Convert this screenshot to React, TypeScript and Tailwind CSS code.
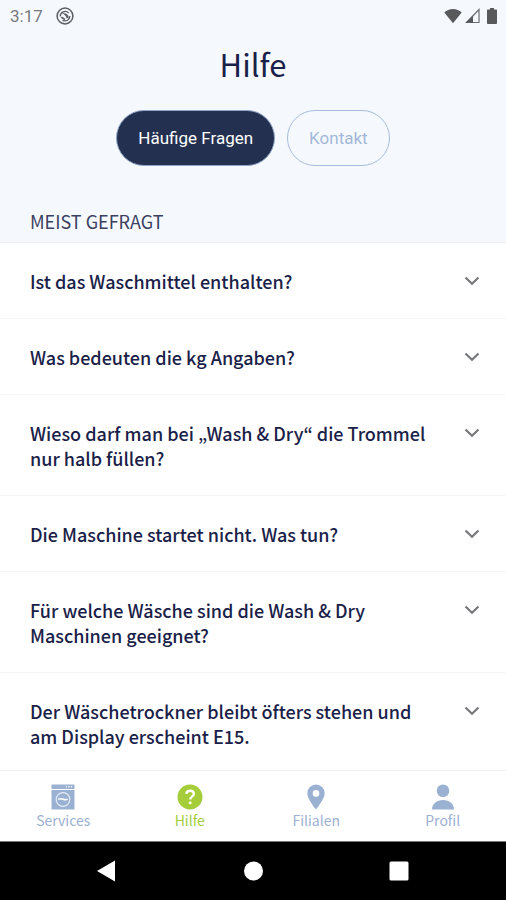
import { useState } from 'react'

const questions = [
  'Ist das Waschmittel enthalten?',
  'Was bedeuten die kg Angaben?',
  'Wieso darf man bei „Wash & Dry“ die Trommel nur halb füllen?',
  'Die Maschine startet nicht. Was tun?',
  'Für welche Wäsche sind die Wash & Dry Maschinen geeignet?',
  'Der Wäschetrockner bleibt öfters stehen und am Display erscheint E15.',
]

function StatusBar() {
  return (
    <div className="flex h-8 items-center justify-between pl-[10px] pr-[9px] font-[Roboto,sans-serif] text-[#77797c]">
      <div className="flex items-center gap-[13px]">
        <span className="text-[17px] leading-6">3:17</span>
        <svg width="18" height="18" viewBox="0 0 18 18" fill="none">
          <circle cx="9" cy="9" r="7.9" stroke="#5b5d60" strokeWidth="1.5" />
          <path d="M4.200 9.500a4.900 4.900 0 0 1 8.500-3.400M13.900 9a4.900 4.900 0 0 1-7.400 4.200" stroke="#5b5d60" strokeWidth="1.300" />
          <path d="M6 6.500c3.300-1 6.500.5 6.800 4.300l-2.300.4C10 8.800 8.500 7.400 6 6.500z" fill="#5b5d60" />
          <path d="M5.300 10.200l3.700 2.300" stroke="#5b5d60" strokeWidth="1.600" />
        </svg>
      </div>
      <div className="flex items-center gap-[3px]">
        <svg width="18" height="16" viewBox="0 0 18 16" fill="#58595b">
          <path d="M9 15.200L.3 4.500C2.600 2.200 5.600.9 9 .9s6.400 1.300 8.700 3.600z" />
        </svg>
        <svg width="15" height="16" viewBox="0 0 15 16">
          <path d="M1.500 14.500L14 1.500v13z" fill="none" stroke="#6b6c6e" strokeWidth="1.200" />
          <path d="M.5 15L8 7.500V15z" fill="#58595b" />
        </svg>
        <svg className="ml-1" width="10" height="16" viewBox="0 0 10 16" fill="#58595b">
          <path d="M3 0h4v1.500h2c.6 0 1 .4 1 1V15c0 .6-.4 1-1 1H1c-.6 0-1-.4-1-1V2.500c0-.6.4-1 1-1h2z" />
        </svg>
      </div>
    </div>
  )
}

function WasherIcon() {
  return (
    <svg width="24" height="26" viewBox="0 0 24 26">
      <path d="M.5.500h23v4.600H.5zM.5 6h23v19.500H.5z" fill="currentColor" />
      <circle cx="15.500" cy="2.800" r=".7" fill="#fff" />
      <circle cx="18" cy="2.800" r=".7" fill="#fff" />
      <circle cx="20.500" cy="2.800" r=".7" fill="#fff" />
      <circle cx="12" cy="15.500" r="6.800" fill="none" stroke="#e4ecf6" strokeWidth="1.200" />
      <path d="M7.300 15.300c1.800-.8 3.300-.7 4.700-.1s2.900.8 4.700.2" fill="none" stroke="#fff" strokeWidth="1.500" />
    </svg>
  )
}

function HelpIcon() {
  return (
    <svg width="26" height="26" viewBox="0 0 26 26" fill="none">
      <circle cx="13" cy="13" r="12.500" fill="#a4cd39" />
      <path
        d="M9.400 9.900c.2-2 1.700-3.100 3.700-3.100 2.100 0 3.700 1.200 3.700 3.100 0 2.700-3.500 2.700-3.500 5.200v.5"
        stroke="#fff"
        strokeWidth="2.400"
      />
      <circle cx="13.200" cy="18.800" r="1.500" fill="#fff" />
    </svg>
  )
}

function PinIcon() {
  return (
    <svg width="18" height="26" viewBox="0 0 18 26">
      <path
        fill="currentColor"
        fillRule="evenodd"
        d="M9 .5A8.700 8.700 0 0 0 .3 9.200C.3 15 9 25.500 9 25.500S17.700 15 17.700 9.200A8.700 8.700 0 0 0 9 .5zm0 5.600a3.300 3.300 0 1 1 0 6.600 3.300 3.300 0 0 1 0-6.600z"
      />
    </svg>
  )
}

function ProfileIcon() {
  return (
    <svg width="22" height="26" viewBox="0 0 22 26" fill="currentColor">
      <circle cx="11" cy="6.800" r="6.300" />
      <path d="M0 25.500c0-5.500 4.500-9.500 11-9.500s11 4 11 9.500z" />
    </svg>
  )
}

const tabs = [
  { name: 'Services', icon: <WasherIcon /> },
  { name: 'Hilfe', icon: <HelpIcon /> },
  { name: 'Filialen', icon: <PinIcon /> },
  { name: 'Profil', icon: <ProfileIcon /> },
]

export default function App() {
  const [section, setSection] = useState('faq')

  const active = 'border-[#8fa6c9] bg-[#24304f] text-white'
  const inactive = 'border-[#a9bbd9] text-[#a3b8d8]'

  return (
    <div className="flex h-screen flex-col bg-white font-['Noto_Sans_CJK_KR',sans-serif] text-[#1a2148]">
      <header className="border-b border-[#eceff8] bg-[#f5f9fe]">
        <StatusBar />
        <h1 className="pt-[11px] text-center text-[31px] leading-[42px]">Hilfe</h1>
        <div className="flex justify-center gap-3 pt-[25px] font-[Roboto,sans-serif] text-[17px]">
          <button
            type="button"
            onClick={() => setSection('faq')}
            className={`h-14 rounded-full border px-[21px] pt-[2px] ${section === 'faq' ? active : inactive}`}
          >
            Häufige Fragen
          </button>
          <button
            type="button"
            onClick={() => setSection('contact')}
            className={`h-14 rounded-full border px-[21px] pt-[2px] ${section === 'contact' ? active : inactive}`}
          >
            Kontakt
          </button>
        </div>
        <h2 className="px-[30px] pt-[43px] pb-[9px] text-[18px] leading-6 text-[#3b4060]">MEIST GEFRAGT</h2>
      </header>

      <main className="min-h-0 flex-1 overflow-y-auto [scrollbar-width:none]">
        {questions.map((question) => (
          <button
            key={question}
            type="button"
            className="flex w-full items-start justify-between gap-6 border-b border-[#f5f6f8] pt-[26px] pr-[22px] pb-6 pl-[30px] text-left text-[18px] leading-[25px] font-medium"
          >
            {question}
            <svg className="shrink-0" width="24" height="25" viewBox="0 0 24 25" fill="none">
              <path d="M5.500 8.500l6.500 6.300 6.500-6.300" stroke="#77787b" strokeWidth="2.200" />
            </svg>
          </button>
        ))}
      </main>

      <nav className="grid grid-cols-4 border-t border-[#f0f1f3] pt-[13px] pb-[11px]">
        {tabs.map((tab) => (
          <a
            key={tab.name}
            href="#"
            className={`flex flex-col items-center text-[14px] leading-5 ${tab.name === 'Hilfe' ? 'text-[#a4cd39]' : 'text-[#9bb1d2]'}`}
          >
            {tab.icon}
            {tab.name}
          </a>
        ))}
      </nav>

      <div className="flex h-[59px] items-center justify-center gap-[126px] border-t border-[#777] bg-black">
        <button type="button" aria-label="Zurück">
          <svg width="20" height="22" viewBox="0 0 20 22" fill="#fff">
            <path d="M18 .5v21L0 11z" />
          </svg>
        </button>
        <button type="button" aria-label="Startseite">
          <svg width="20" height="22" viewBox="0 0 20 22" fill="#fff">
            <circle cx="10.500" cy="11" r="9.500" />
          </svg>
        </button>
        <button type="button" aria-label="Übersicht">
          <svg width="20" height="22" viewBox="0 0 20 22" fill="#fff">
            <rect x=".5" y="1.500" width="19" height="19" rx="1.500" />
          </svg>
        </button>
      </div>
    </div>
  )
}
